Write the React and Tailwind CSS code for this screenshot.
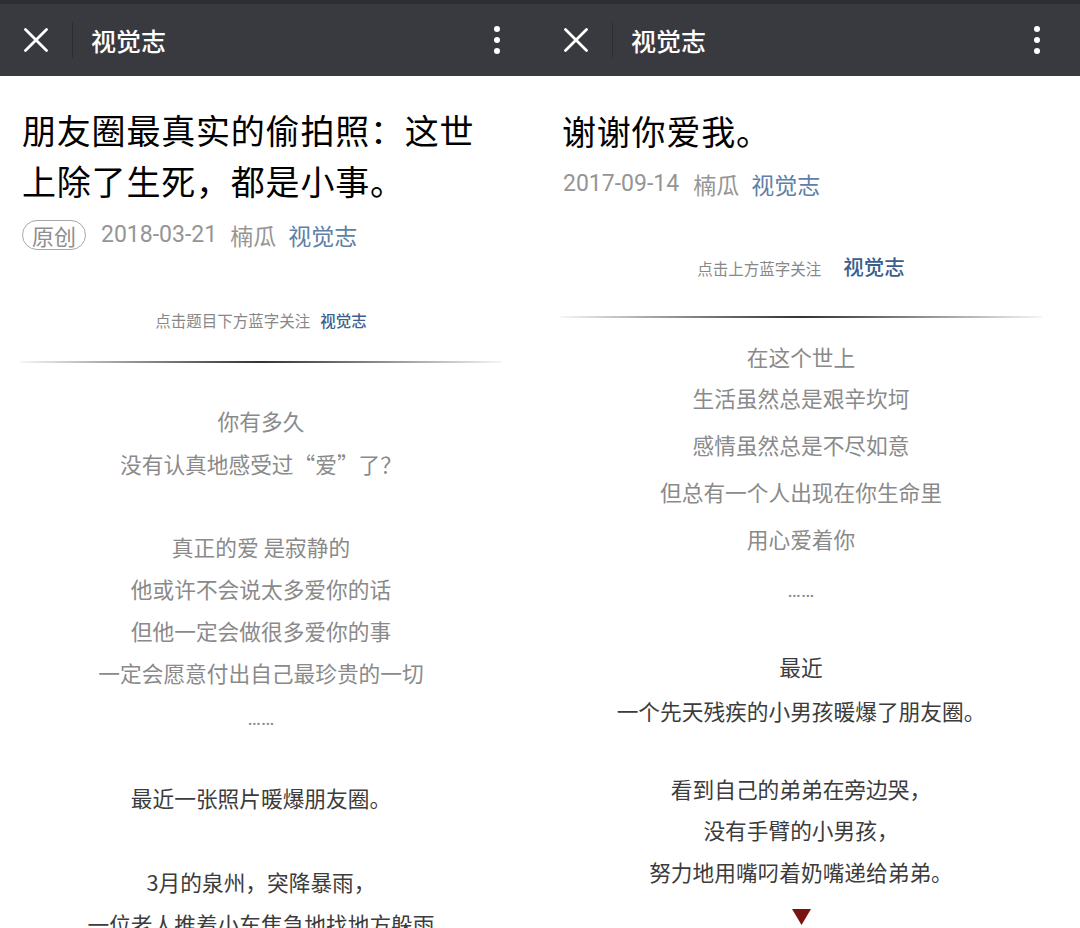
import React from "react";

const CJK = { fontFamily: "'Noto Sans CJK SC', 'Noto Sans', sans-serif" };
const ROBOTO = { fontFamily: "Roboto, 'Noto Sans CJK SC', sans-serif" };

function Header() {
  return (
    <div>
      <div className="h-[4px] bg-[#2d2e32]" />
      <div className="h-[72px] bg-[#393a3f] flex items-center px-[24px]">
        <svg width="24" height="24" viewBox="0 0 24 24" className="shrink-0">
          <path d="M1.5 1.5 L22.5 22.5 M22.5 1.5 L1.5 22.5" stroke="#fff" strokeWidth="2.8" strokeLinecap="round" />
        </svg>
        <div className="ml-[24px] w-px h-[36px] bg-[#2c2d31]" />
        <div className="ml-[18px] text-white text-[25px] leading-none font-medium">视觉志</div>
        <div className="ml-auto mr-[16px] flex flex-col items-center gap-[5px]">
          <div className="w-[6px] h-[6px] rounded-full bg-white" />
          <div className="w-[6px] h-[6px] rounded-full bg-white" />
          <div className="w-[6px] h-[6px] rounded-full bg-white" />
        </div>
      </div>
    </div>
  );
}

function Divider({ className }) {
  return (
    <div className={"h-[2px] bg-linear-to-r from-[#f6f6f6] via-[#333333] to-[#f6f6f6] " + className} />
  );
}

function Line({ children, mt, dark }) {
  return (
    <div
      className={
        "h-[42px] leading-[42px] text-[21.7px] text-center whitespace-nowrap " +
        (dark ? "text-[#3c3c3c] " : "text-[#8a8a8a] ") +
        (mt || "")
      }
    >
      {children}
    </div>
  );
}

function Dots({ mt }) {
  return (
    <div className={"h-[42px] leading-[42px] text-center text-[#8a8a8a] text-[20px] " + mt} style={ROBOTO}>
      ……
    </div>
  );
}

function LeftPanel() {
  return (
    <div className="w-[540px] h-[928px] overflow-hidden bg-white" style={CJK}>
      <Header />
      <div className="pl-[20px] pr-[38px]">
        <h1 className="mt-[28px] pl-[2px] text-[34px] leading-[51px] tracking-[0.8px] text-black font-normal">
          朋友圈最真实的偷拍照：这世
          <br />
          上除了生死，都是小事。
        </h1>
        <div className="mt-[14px] pl-[2px] flex items-center h-[30px] text-[23px] text-[#959595]">
          <div className="h-[30px] px-[9px] rounded-full border border-[#a8a8a8] flex items-center leading-none text-[22px] text-[#8e8e8e]">
            原创
          </div>
          <span className="ml-[15px]" style={ROBOTO}>2018-03-21</span>
          <span className="ml-[13px]">楠瓜</span>
          <span className="ml-[12px] text-[#607fa6]">视觉志</span>
        </div>
        <div className="mt-[58px] h-[24px] leading-[24px] text-center text-[15.5px] text-[#888]">
          点击题目下方蓝字关注<span className="ml-[10px] text-[#3d5f8e] font-medium">视觉志</span>
        </div>
        <Divider className="mt-[29px]" />
        <div className="mt-[37px]">
          <Line>你有多久</Line>
          <Line mt="mt-px">没有认真地感受过“爱”了？</Line>
          <Line mt="mt-[41px]">真正的爱 是寂静的</Line>
          <Line>他或许不会说太多爱你的话</Line>
          <Line>但他一定会做很多爱你的事</Line>
          <Line>一定会愿意付出自己最珍贵的一切</Line>
          <Dots mt="mt-[3px]" />
          <Line dark mt="mt-[38px]">最近一张照片暖爆朋友圈。</Line>
          <Line dark mt="mt-[42px]">3月的泉州，突降暴雨，</Line>
          <Line dark>一位老人推着小车焦急地找地方躲雨</Line>
        </div>
      </div>
    </div>
  );
}

function RightPanel() {
  return (
    <div className="w-[540px] h-[928px] overflow-hidden bg-white" style={CJK}>
      <Header />
      <div className="pl-[20px] pr-[38px]">
        <h1 className="mt-[29px] pl-[2px] text-[34px] leading-[51px] tracking-[0.8px] text-black font-normal">
          谢谢你爱我。
        </h1>
        <div className="mt-[13px] pl-[3px] flex items-center h-[30px] text-[23px] text-[#959595]">
          <span style={ROBOTO}>2017-09-14</span>
          <span className="ml-[14px]">楠瓜</span>
          <span className="ml-[12px] text-[#607fa6]">视觉志</span>
        </div>
        <div className="mt-[53px] h-[28px] leading-[28px] text-center text-[15.5px] text-[#888]">
          点击上方蓝字关注<span className="ml-[22px] text-[20.5px] text-[#3b5e8d] font-medium">视觉志</span>
        </div>
        <Divider className="mt-[36px]" />
        <div className="mt-[18px]">
          <Line>在这个世上</Line>
          <Line mt="-mt-px">生活虽然总是艰辛坎坷</Line>
          <Line mt="mt-[5px]">感情虽然总是不尽如意</Line>
          <Line mt="mt-[5px]">但总有一个人出现在你生命里</Line>
          <Line mt="mt-[5px]">用心爱着你</Line>
          <Dots mt="mt-[9px]" />
          <Line dark mt="mt-[35px]">最近</Line>
          <Line dark mt="mt-[2px]">一个先天残疾的小男孩暖爆了朋友圈。</Line>
          <Line dark mt="mt-[36px]">看到自己的弟弟在旁边哭，</Line>
          <Line dark mt="-mt-px">没有手臂的小男孩，</Line>
          <Line dark>努力地用嘴叼着奶嘴递给弟弟。</Line>
          <div className="mt-[16px] flex justify-center">
            <svg width="19" height="16" viewBox="0 0 19 16">
              <polygon points="0,0 19,0 9.5,16" fill="#7a1410" />
            </svg>
          </div>
        </div>
      </div>
    </div>
  );
}

export default function App() {
  return (
    <div className="flex w-[1080px] h-[928px] overflow-hidden bg-white">
      <LeftPanel />
      <RightPanel />
    </div>
  );
}
